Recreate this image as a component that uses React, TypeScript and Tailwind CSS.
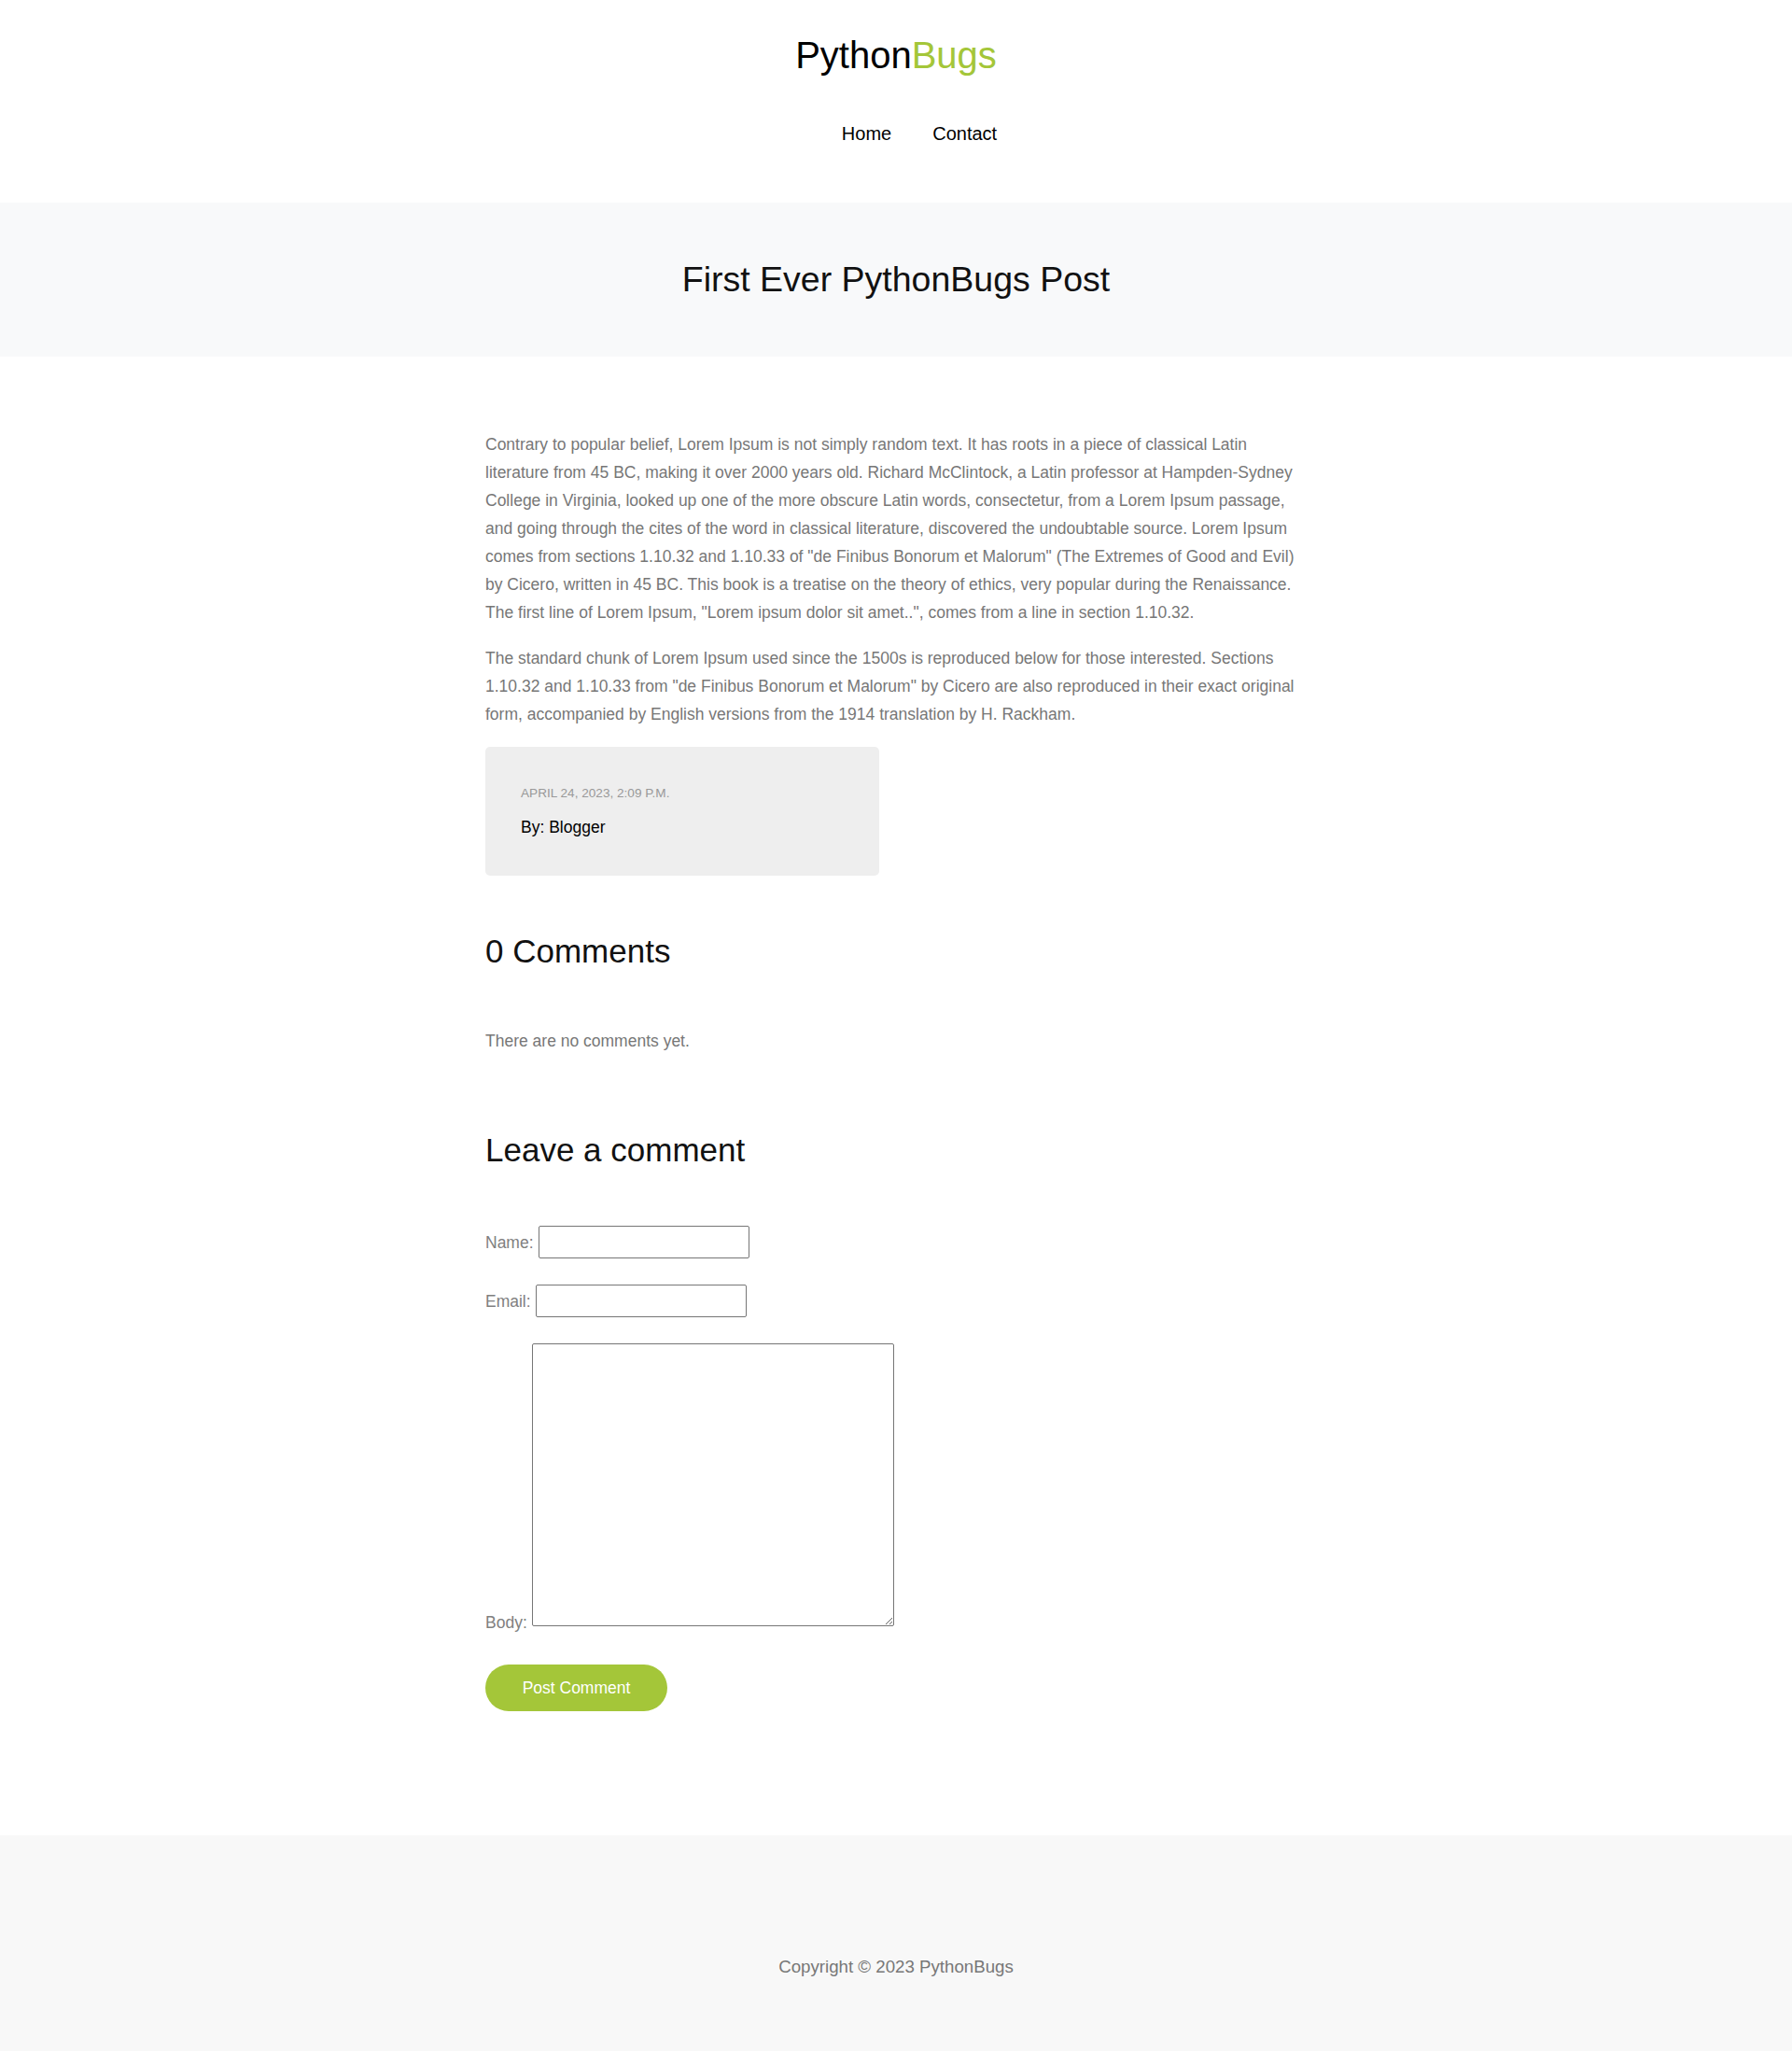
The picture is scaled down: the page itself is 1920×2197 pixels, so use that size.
import React from 'react';

const paragraphs = [
  'Contrary to popular belief, Lorem Ipsum is not simply random text. It has roots in a piece of classical Latin literature from 45 BC, making it over 2000 years old. Richard McClintock, a Latin professor at Hampden-Sydney College in Virginia, looked up one of the more obscure Latin words, consectetur, from a Lorem Ipsum passage, and going through the cites of the word in classical literature, discovered the undoubtable source. Lorem Ipsum comes from sections 1.10.32 and 1.10.33 of "de Finibus Bonorum et Malorum" (The Extremes of Good and Evil) by Cicero, written in 45 BC. This book is a treatise on the theory of ethics, very popular during the Renaissance. The first line of Lorem Ipsum, "Lorem ipsum dolor sit amet..", comes from a line in section 1.10.32.',
  'The standard chunk of Lorem Ipsum used since the 1500s is reproduced below for those interested. Sections 1.10.32 and 1.10.33 from "de Finibus Bonorum et Malorum" by Cicero are also reproduced in their exact original form, accompanied by English versions from the 1914 translation by H. Rackham.',
];

const Header: React.FC = () => (
  <header className="pt-[36px] pb-[62px] bg-white">
    <h1 className="text-center text-[40px] leading-[46px] text-black">
      Python<span className="text-[#a4c639]">Bugs</span>
    </h1>
    <nav className="mt-[50px] flex justify-center gap-[44px] pl-[50px] text-[20px] leading-[23px] text-black">
      <a href="#">Home</a>
      <a href="#">Contact</a>
    </nav>
  </header>
);

const CommentForm: React.FC = () => (
  <form onSubmit={(e) => e.preventDefault()} className="text-[17.5px] text-[#808080]">
    <div className="flex items-center gap-[5px]">
      <label htmlFor="name" className="leading-[20px]">Name:</label>
      <input
        id="name"
        type="text"
        className="w-[226px] h-[35px] border border-[#767676] rounded-[2px] bg-white px-1 text-black"
      />
    </div>
    <div className="mt-[28px] flex items-center gap-[5px]">
      <label htmlFor="email" className="leading-[20px]">Email:</label>
      <input
        id="email"
        type="email"
        className="w-[226px] h-[35px] border border-[#767676] rounded-[2px] bg-white px-1 text-black"
      />
    </div>
    <div className="mt-[28px] flex items-end gap-[5px]">
      <label htmlFor="body" className="leading-[8px]">Body:</label>
      <textarea
        id="body"
        className="w-[388px] h-[303px] border border-[#767676] rounded-[2px] bg-white p-1 text-black"
      />
    </div>
    <button
      type="submit"
      className="mt-[41px] w-[195px] h-[50px] rounded-full bg-[#a4c639] text-white text-[17.5px] leading-[20px]"
    >
      Post Comment
    </button>
  </form>
);

export default function App() {
  return (
    <div className="min-h-[2197px] bg-white font-['Liberation_Sans',Arial,sans-serif]">
      <Header />

      {/* Title band */}
      <section className="h-[165px] bg-[#f8f9fa] flex items-center justify-center">
        <h1 className="text-[37.5px] leading-[43px] text-[#111]">First Ever PythonBugs Post</h1>
      </section>

      <main className="w-[880px] mx-auto pt-[79px] pb-[133px]">
        <p className="text-[17.5px] leading-[30px] text-[#777] mb-[19px]">{paragraphs[0]}</p>
        <p className="text-[17.5px] leading-[30px] text-[#777] mb-[20px]">{paragraphs[1]}</p>

        <div className="w-[422px] rounded-[5px] bg-[#eeeeee] px-[38px] pt-[42px] pb-[42px]">
          <p className="text-[13.6px] leading-[16px] uppercase text-[#999]">April 24, 2023, 2:09 p.m.</p>
          <p className="mt-[18px] text-[17.5px] leading-[20px] text-black">By: Blogger</p>
        </div>

        <h2 className="mt-[61px] text-[35px] leading-[40px] text-[#111]">0 Comments</h2>
        <p className="mt-[61px] text-[17.5px] leading-[30px] text-[#777]">There are no comments yet.</p>

        <h2 className="mt-[82px] text-[35px] leading-[40px] text-[#111]">Leave a comment</h2>
        <div className="mt-[61px]">
          <CommentForm />
        </div>
      </main>

      <footer className="h-[231px] bg-[#f8f8f8] pt-[130px] text-center text-[18.7px] leading-[22px] text-[#777]">
        Copyright © 2023 PythonBugs
      </footer>
    </div>
  );
}
